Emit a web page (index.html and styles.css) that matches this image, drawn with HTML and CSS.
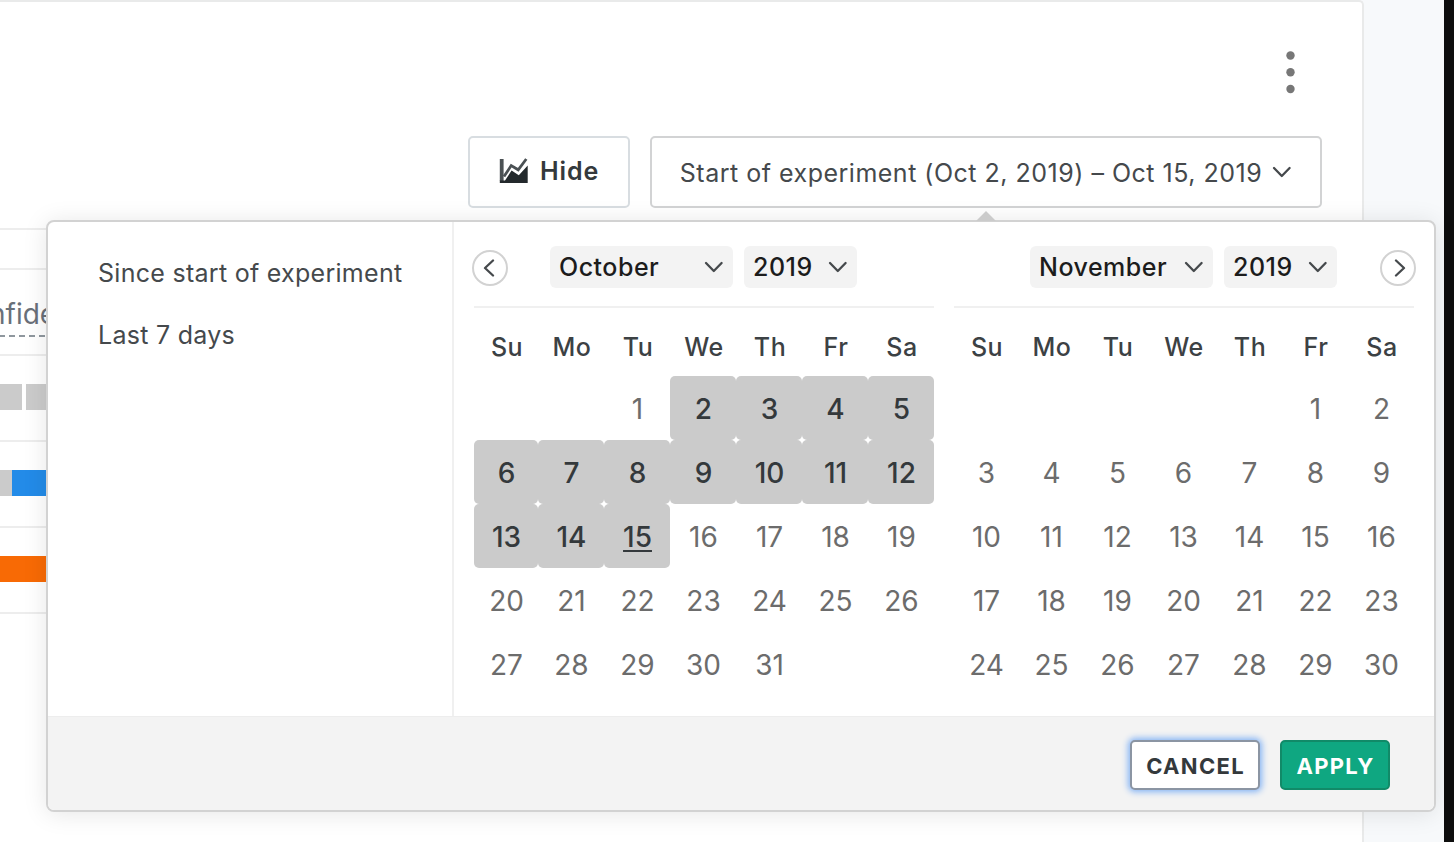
FILE: index.html
```html
<!DOCTYPE html>
<html lang="en">
<head>
<meta charset="utf-8">
<title>Experiment results</title>
<link rel="stylesheet" href="styles.css">
</head>
<body>
<div class="page">
  <main class="card">
    <div class="card-top">
      <svg class="kebab" width="12" height="48" viewBox="0 0 12 48"><circle cx="6.5" cy="7.5" r="4.2"/><circle cx="6.5" cy="24.3" r="4.2"/><circle cx="6.5" cy="41" r="4.2"/></svg>
    </div>
    <div class="toolbar">
      <button class="btn-hide">
        <svg width="30" height="26" viewBox="0 0 30 26"><path d="M2.7 1v22" stroke="#4b5154" stroke-width="3.8" fill="none"/><path d="M5 18.5 12.2 7.6l7 4.2L27.3 1" stroke="#4b5154" stroke-width="2.8" fill="none"/><path d="M.8 25V22.5h5.2L12.6 12.6l7.2 4.6L28.7 7.5V25z" fill="#23292c"/></svg>
        <span>Hide</span>
      </button>
      <button class="btn-range">
        <span>Start of experiment (Oct 2, 2019) – Oct 15, 2019</span>
        <svg class="chev" width="20" height="14" viewBox="0 0 20 14"><path d="M2 2l7.8 8 7.8-8"/></svg>
      </button>
    </div>
    <div class="results">
      <div class="row row-blank"></div>
      <div class="row row-head"><span class="col-label">nfidence</span></div>
      <div class="row"><i class="bar gray w22"></i><i class="bar gray rest gap"></i></div>
      <div class="row"><i class="bar gray w12"></i><i class="bar blue rest"></i></div>
      <div class="row"><i class="bar orange rest"></i></div>
    </div>
  </main>
  <div class="gutter"></div>
  <div class="edge"></div>

  <section class="popup">
    <svg class="caret" width="20" height="10" viewBox="0 0 20 10"><path d="M0 10 10 0l10 10z"/></svg>
    <div class="popup-body">
      <ul class="presets">
        <li>Since start of experiment</li>
        <li>Last 7 days</li>
      </ul>
      <div class="months">
        <div class="month">
          <div class="month-head">
            <button class="nav prev"><svg width="12" height="18" viewBox="0 0 12 18"><path d="M10 1.5 2 9l8 7.5"/></svg></button>
            <div class="selects">
              <div class="select month-name"><span>October</span><svg class="chev" width="20" height="14" viewBox="0 0 20 14"><path d="M2 3l7.8 8 7.8-8"/></svg></div>
              <div class="select year"><span>2019</span><svg class="chev" width="20" height="14" viewBox="0 0 20 14"><path d="M2 3l7.8 8 7.8-8"/></svg></div>
            </div>
          </div>
          <div class="week names"><b>Su</b><b>Mo</b><b>Tu</b><b>We</b><b>Th</b><b>Fr</b><b>Sa</b></div>
          <div class="week"><span></span><span></span><span>1</span><span class="on">2</span><span class="on">3</span><span class="on">4</span><span class="on">5</span></div>
          <div class="week"><span class="on">6</span><span class="on">7</span><span class="on">8</span><span class="on">9</span><span class="on">10</span><span class="on">11</span><span class="on">12</span></div>
          <div class="week"><span class="on">13</span><span class="on">14</span><span class="on today">15</span><span>16</span><span>17</span><span>18</span><span>19</span></div>
          <div class="week"><span>20</span><span>21</span><span>22</span><span>23</span><span>24</span><span>25</span><span>26</span></div>
          <div class="week"><span>27</span><span>28</span><span>29</span><span>30</span><span>31</span><span></span><span></span></div>
        </div>
        <div class="month">
          <div class="month-head">
            <div class="selects">
              <div class="select month-name"><span>November</span><svg class="chev" width="20" height="14" viewBox="0 0 20 14"><path d="M2 3l7.8 8 7.8-8"/></svg></div>
              <div class="select year"><span>2019</span><svg class="chev" width="20" height="14" viewBox="0 0 20 14"><path d="M2 3l7.8 8 7.8-8"/></svg></div>
            </div>
            <button class="nav next"><svg width="12" height="18" viewBox="0 0 12 18"><path d="M2 1.5 10 9l-8 7.5"/></svg></button>
          </div>
          <div class="week names"><b>Su</b><b>Mo</b><b>Tu</b><b>We</b><b>Th</b><b>Fr</b><b>Sa</b></div>
          <div class="week"><span></span><span></span><span></span><span></span><span></span><span>1</span><span>2</span></div>
          <div class="week"><span>3</span><span>4</span><span>5</span><span>6</span><span>7</span><span>8</span><span>9</span></div>
          <div class="week"><span>10</span><span>11</span><span>12</span><span>13</span><span>14</span><span>15</span><span>16</span></div>
          <div class="week"><span>17</span><span>18</span><span>19</span><span>20</span><span>21</span><span>22</span><span>23</span></div>
          <div class="week"><span>24</span><span>25</span><span>26</span><span>27</span><span>28</span><span>29</span><span>30</span></div>
        </div>
      </div>
    </div>
    <footer class="popup-foot">
      <button class="cancel">CANCEL</button>
      <button class="apply">APPLY</button>
    </footer>
  </section>
</div>
</body>
</html>
```
FILE: styles.css
```css
* { box-sizing: border-box; }
body {
  margin: 0;
  overflow: hidden;
  font-family: Inter, "Liberation Sans", sans-serif;
  color: #45494c;
}
button {
  font-family: inherit;
  margin: 0;
  padding: 0;
  background: #fff;
  color: inherit;
}
.page {
  position: relative;
  display: flex;
  width: 1454px;
  height: 842px;
  background: #f7f9fb;
}
.card {
  width: 1364px;
  overflow: hidden;
  background: #fff;
  border: 2px solid #e9eaea;
  border-left: 0;
  border-bottom: 0;
  border-top-right-radius: 5px;
}
.gutter { flex: 1; }
.edge { width: 10px; background: #0e0e0e; }
.card-top {
  display: flex;
  justify-content: flex-end;
  height: 134px;
  padding: 46px 66px 0 0;
}
.kebab { fill: #777; }
.toolbar {
  display: flex;
  justify-content: flex-end;
  gap: 20px;
  padding-right: 40px;
}
.toolbar button {
  display: flex;
  align-items: center;
  justify-content: center;
  height: 72px;
  border: 2px solid #d2d3d4;
  border-radius: 5px;
}
.toolbar .btn-hide {
  width: 162px;
  gap: 11px;
  padding-bottom: 2px;
  border-color: #d8dde1;
  color: #34393c;
  font-size: 25px;
  font-weight: 600;
  letter-spacing: 0.9px;
}
.toolbar .btn-range {
  width: 672px;
  gap: 10px;
  padding-top: 2px;
  font-size: 25px;
  letter-spacing: 0.5px;
  white-space: nowrap;
}
.chev, .nav svg {
  flex: none;
  fill: none;
  stroke: #45494c;
  stroke-width: 2.3;
  stroke-linecap: round;
  stroke-linejoin: round;
}
.results {
  margin-top: 20px;
  border-top: 2px solid #ededed;
}
.row {
  display: flex;
  align-items: center;
  height: 86px;
  padding-bottom: 2px;
  border-bottom: 2px solid #ededed;
}
.row-blank { height: 40px; }
.row-head { padding: 9px 0 0; }
.col-label {
  margin-left: -11px;
  padding-bottom: 3px;
  border-bottom: 2px dashed #8f979e;
  color: #697079;
  font-size: 28px;
  line-height: 36px;
}
.bar { height: 26px; }
.w22 { width: 22px; }
.w12 { width: 12px; }
.rest { width: 60px; }
.gap { margin-left: 4px; }
.gray { background: #cbcbcb; }
.blue { background: #238be8; }
.orange { background: #f86a05; }

.popup {
  position: absolute;
  left: 46px;
  top: 220px;
  width: 1390px;
  height: 592px;
  display: flex;
  flex-direction: column;
  background: #fff;
  border: 2px solid #d2d2d2;
  border-radius: 8px;
  box-shadow: 0 2px 24px rgba(0, 0, 0, 0.1);
}
.caret {
  position: absolute;
  left: 928px;
  top: -11px;
  fill: #cbcbcb;
}
.popup-body { display: flex; height: 494px; }
.presets {
  width: 406px;
  margin: 0;
  padding: 20px 0 0 50px;
  border-right: 2px solid #f0f0f0;
  list-style: none;
  font-size: 25px;
  letter-spacing: 0.28px;
  line-height: 62px;
}
.months { display: flex; gap: 20px; padding: 24px 20px 0; }
.month { width: 460px; }
.month-head {
  position: relative;
  display: flex;
  justify-content: center;
  height: 62px;
  padding-right: 1px;
  border-bottom: 2px solid #f0f0f0;
}
.selects { display: flex; gap: 11px; }
.select {
  display: flex;
  align-items: center;
  justify-content: space-between;
  height: 42px;
  padding: 0 9px;
  border-radius: 6px;
  background: #f3f3f3;
  color: #1c1c1c;
  font-size: 25px;
  font-weight: 500;
  letter-spacing: 0.5px;
}
.month-name { width: 183px; }
.year { width: 113px; }
.nav {
  position: absolute;
  top: 4px;
  display: flex;
  align-items: center;
  justify-content: center;
  width: 36px;
  height: 36px;
  border: 2px solid #d2d2d2;
  border-radius: 50%;
}
.prev { left: -2px; padding-right: 3px; }
.next { right: -2px; padding-left: 3px; }
.week {
  display: grid;
  grid-template-columns: 64px repeat(6, 66px);
  height: 64px;
  color: #6c6c6c;
  font-size: 28px;
  line-height: 63px;
  text-align: center;
}
.week span { height: 64px; padding: 2px 0 0 1px; }
.names {
  height: 68px;
  color: #3c4144;
  font-size: 25px;
  line-height: 78px;
  letter-spacing: 0.5px;
}
.names b { padding-left: 2px; font-weight: 500; }
.week .on {
  border-radius: 5px;
  background: #cbcbcb;
  color: #34393c;
  font-weight: 500;
}
.today {
  text-decoration: underline;
  text-decoration-thickness: 2px;
  text-underline-offset: 3px;
}
.popup-foot {
  display: flex;
  justify-content: flex-end;
  gap: 20px;
  height: 94px;
  padding: 22px 44px 0 0;
  border-top: 1px solid #ededed;
  border-radius: 0 0 6px 6px;
  background: #f3f3f3;
}
.popup-foot button {
  height: 50px;
  margin-top: 1px;
  padding-top: 2px;
  border-radius: 5px;
  font-size: 22px;
  font-weight: 700;
  letter-spacing: 1.3px;
  text-indent: 1px;
}
.popup-foot .cancel {
  width: 130px;
  border: 2px solid #8b95a3;
  color: #34393c;
  box-shadow: 0 0 6px 2px #85b4f5;
}
.popup-foot .apply {
  width: 110px;
  border: 2px solid #118a68;
  background: #0fa781;
  color: #fff;
}
```
